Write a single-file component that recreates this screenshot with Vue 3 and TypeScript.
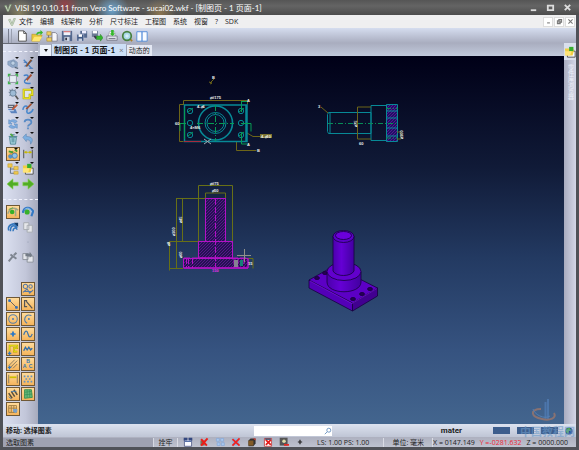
<script setup lang="ts">
import { ref } from 'vue'

interface Tool { id: string; label: string; boxed?: boolean; menu?: boolean }

const menus = ['文件', '编辑', '线架构', '分析', '尺寸标注', '工程图', '系统', '视窗', '?', 'SDK']

const art: Record<string, string> = {
  blank: '',
  page: '<path d="M3 1h6l3 3v9H3z" fill="#fff" stroke="#444"/><path d="M9 1v3h3" fill="none" stroke="#444"/>',
  open: '<path d="M1 5h5l1 1h6l-3 7H1z" fill="#e8c73c" stroke="#b58e18" stroke-width=".6"/><path d="M4 8h9l-3 5H1z" fill="#ffe672"/><path d="M6 5c1-3 3-3 5-3V0l3 3-3 3V4C9 4 8 4 7 6z" fill="#35b82c"/>',
  assembly: '<path d="M1 2h5v4H1zM1 9h6v4H1z" fill="#f0cf62" stroke="#a98a2c" stroke-width=".7"/><path d="M7 3h4l2 2v8H7z" fill="#f6f6fa" stroke="#667" stroke-width=".8"/><path d="M3 6v3" stroke="#667"/>',
  save: '<path d="M1 1h12v12H1z" fill="#54698f"/><path d="M3 1h8v5H3z" fill="#eef2fa"/><path d="M3 2h8" stroke="#c44"/><path d="M4 8h6v5H4z" fill="#cdd5e2"/><path d="M5 9h2v3H5z" fill="#334"/>',
  saveall: '<path d="M5 1h8v8H5z" fill="#54698f"/><path d="M7 1h5v3H7z" fill="#eef"/><path d="M1 5h8v8H1z" fill="#405985" stroke="#dde" stroke-width=".5"/><path d="M3 5h4v3H3z" fill="#fff"/><path d="M3 10h4v3H3z" fill="#c2cbdc"/>',
  export: '<path d="M1 1h7v7H1z" fill="#6b7993"/><path d="M2 1h5v3H2z" fill="#fff"/><path d="M6 7h5V5l3 4-3 4v-2H6z" fill="#33b52d" stroke="#207a20" stroke-width=".5"/><path d="M4 7l2 3" stroke="#334" stroke-width="2"/>',
  print: '<path d="M3 7l1-5h6l1 5z" fill="#fff" stroke="#889" stroke-width=".6"/><path d="M1 7h12v5H1z" fill="#dde1e9" stroke="#667" stroke-width=".8"/><path d="M6 0h3v4h2L7.500 7 4 4h2z" fill="#35b82c"/><path d="M3 10h8" stroke="#667"/>',
  preview: '<path d="M9 9l4 4" stroke="#a87e2a" stroke-width="2"/><circle cx="7" cy="7" r="5" fill="#a9d8e8" stroke="#47803e" stroke-width="2"/><circle cx="7" cy="7" r="2" fill="#d5eff5"/>',
  panes: '<path d="M1 2h12v11H1z" fill="#f9fcff" stroke="#4a86d8"/><path d="M7 2v11" stroke="#4a86d8" stroke-width="1.400"/>',
  view: '<path d="M1 4l7-2 4 3v5l-6 1-5-3z" fill="#93abc9" stroke="#6783a8" stroke-width=".6"/><circle cx="7" cy="6" r="2.500" fill="#bdd0e4" stroke="#6680a0" stroke-width=".7"/><path d="M9 11l4 1" stroke="#567" stroke-width="1.500"/>',
  wand: '<path d="M2 2l9 10M3 10l9-7" stroke="#4d83c0" stroke-width="1.500"/><path d="M5 10l6-8" stroke="#854e2d" stroke-width="2"/><path d="M2 5h4M8 12h5" stroke="#3a70b8"/>',
  fit: '<path d="M3 3h8v8H3z" fill="#e6eef4" stroke="#667" stroke-width=".7"/><path d="M1 1h4L1 5zM13 1H9l4 4zM1 13h4L1 9zM13 13H9l4-4z" fill="#3fb34c"/>',
  pencil: '<path d="M2 3c5-2 7 1 3 4s-2 6 5 5" fill="none" stroke="#4380c8" stroke-width="1.700"/><path d="M5 9l6-7" stroke="#a84f32" stroke-width="2.200"/><path d="M4 11l1-3 1 1z" fill="#ffe5b0"/>',
  gear: '<path d="M2 5h9M6 1v9M3 2l7 7M10 2L3 9" stroke="#64788e" stroke-width="1.200"/><circle cx="7" cy="6" r="3.500" fill="#9ebbd6" stroke="#6b8299"/><path d="M10 9l3 4" stroke="#555" stroke-width="2"/>',
  shape: '<path d="M2 2h10v6H9v4H2z" fill="#dfe3ee" stroke="#aaa300" stroke-width="2.400"/><path d="M2 2h10v6H9v4H2z" fill="none" stroke="#f2eb27" stroke-width="1.200"/>',
  paint: '<path d="M1 2h8v4H1z" fill="#5a6070"/><path d="M1 7h9l2 5H5z" fill="#5b83be"/><path d="M6 8l6-6" stroke="#c25836" stroke-width="2"/><path d="M2 4h5" stroke="#eee"/><path d="M2 9h6" stroke="#dce9f9"/>',
  curve: '<path d="M1 8c1-6 7-6 5 0s5 5 7-1" fill="none" stroke="#4787cc" stroke-width="1.800"/><path d="M5 7l6-6" stroke="#a45131" stroke-width="2"/>',
  refresh: '<path d="M2 7V2l2 1c3-2 6-1 8 1L9 6C7 4 5 4 4 5l2 2zM12 7v5l-2-1c-3 2-6 1-8-1l3-2c2 2 4 2 5 1L8 7z" fill="#7eace0" stroke="#5885b8" stroke-width=".6"/>',
  help: '<path d="M3 5c0-4 8-4 8 0 0 3-4 2-4 5M7 11v2" fill="none" stroke="#578ac5" stroke-width="2"/>',
  trash: '<path d="M3 5h8l-1 8H4z" fill="#a6d5df" stroke="#4a8291"/><path d="M2 4h10M5 2h4M6 6v5M8 6v5" stroke="#40798c"/><path d="M4 1l3 3" stroke="#51a844" stroke-width="2"/>',
  undo: '<path d="M1 5l4-4v3c7 0 9 4 5 9 0-4-1-5-5-5v2z" fill="#7dafe0" stroke="#527dac" stroke-width=".6"/>',
  scene: '<path d="M1 9l5-6 6 3-4 7z" fill="#daa04a"/><circle cx="4" cy="10" r="2.500" fill="#5193c9"/><circle cx="9" cy="9" r="3" fill="#92c4e8" stroke="#487faf"/><path d="M2 4l5 1M9 2l3 2" stroke="#3e9d34" stroke-width="2"/>',
  dimension: '<path d="M2 2v10M12 2v10" stroke="#555" stroke-width="1.200"/><path d="M3 5h8M3 5l2-1v2zM11 5L9 4v2z" fill="#c7b800" stroke="#c7b800"/>',
  tree: '<path d="M4 4v8h5M4 7h5" fill="none" stroke="#567"/><path d="M1 1h5v4H1zM8 4h5v4H8zM8 10h5v3H8z" fill="#f0ca4e" stroke="#bc982d" stroke-width=".6"/>',
  folder: '<path d="M4 6h9v7H4z" fill="#f5f8ff" stroke="#444"/><path d="M1 3h5l1 1h5l-2 7H2z" fill="#f1ce43"/><path d="M6 1h5v5H6z" fill="#35ad30"/><path d="M1 6h8l-2 5H1z" fill="#ffe478"/>',
  left: '<path d="M0 7l7-6v4h6v4H7v4z" fill="#51ad24" stroke="#8ad255" stroke-width=".7"/>',
  right: '<path d="M14 7L7 1v4H1v4h6v4z" fill="#51ad24" stroke="#8ad255" stroke-width=".7"/>',
  snapA: '<path d="M1 9C3 2 9 1 13 5M10 4v8" fill="none" stroke="#9fa88b" stroke-width="1.800"/><circle cx="6" cy="7" r="2.700" fill="#38b029"/><path d="M2 4l5-2" stroke="#5aaa34"/>',
  snapB: '<path d="M1 8C2 1 9 0 13 6l-2 6" fill="none" stroke="#3479c4" stroke-width="2.500"/><circle cx="6" cy="7" r="3" fill="#38b029"/><path d="M3 4c4-3 7-1 8 3" fill="none" stroke="#9bcaf5"/>',
  rings: '<path d="M2 11c-2-7 7-10 10-5M4 12c0-7 4-8 8-4M7 12c0-4 3-5 5-2" fill="none" stroke="#3376bd" stroke-width="1.800"/><path d="M8 2h5v5" fill="#163d6b"/>',
  copy: '<path d="M2 2h6v8H2zM6 5h6v8H6z" fill="#e6e7ea" stroke="#a3a7ad"/>',
  dot: '<circle cx="7" cy="7" r=".6" fill="#8993a8"/>',
  pin: '<path d="M2 12l5-6M4 4l7 5M8 5l3-3" stroke="#7f8691" stroke-width="2.300"/>',
  paste: '<path d="M1 3h6v7H1zM6 6h7v7H6z" fill="#e4e6eb" stroke="#888d96"/><path d="M4 3h5V1l3 4-3 3V6H4z" fill="#747c87"/>',
  filter: '<g fill="none" stroke="#5578a7" stroke-width="1.200"><circle cx="4" cy="4" r="2.500"/><circle cx="10" cy="4" r="2"/><path d="M1 11l5-4 3 5 4-4M3 10h9"/></g>',
  line: '<path d="M3 3l8 8" stroke="#555" stroke-width="1"/><path d="M2 2h2v2H2zM10 10h2v2h-2z" stroke="#3271bd" fill="#3271bd"/>',
  poly: '<path d="M6 3H3v7h3M5 4l7 8" fill="none" stroke="#555" stroke-width="1.400"/>',
  circle: '<circle cx="7" cy="7" r="5" fill="none" stroke="#547da8" stroke-width="1.200"/><path d="M6 6h2v2H6z" fill="#2d71c3"/>',
  arc: '<path d="M11 3C3 0 1 9 6 12" fill="none" stroke="#547da8" stroke-width="1.300"/><path d="M7 6h2v2H7z" fill="#2d71c3"/>',
  plus: '<path d="M7 4v6M4 7h6" stroke="#2675c8" stroke-width="2"/>',
  wave: '<path d="M2 8c2-6 4-5 5-1s3 5 5 0" fill="none" stroke="#3d73a9" stroke-width="1.400"/>',
  profile: '<path d="M3 10V3h9v3H8v4h4" fill="none" stroke="#b8a800" stroke-width="2"/><path d="M3 10V3h9v3H8v4h4" fill="none" stroke="#f3ea1c" stroke-width=".8"/><path d="M3 10v4M1 12h4" stroke="#3978b5" stroke-width="1.500"/>',
  zigzag: '<path d="M2 9l2-4 2 3 2-3 2 3 2-2" fill="none" stroke="#316eaa" stroke-width="1.600"/>',
  hatch: '<path d="M2 9l7-7M4 11l8-8M7 12l5-5" stroke="#7b6f59"/><path d="M3 9v4M1 11h4" stroke="#3378bd" stroke-width="1.400"/>',
  letters: '<text x="5" y="6" font-family="Liberation Sans" font-size="6" font-weight="700" fill="#3474b1">B</text><text x="1" y="12" font-family="Liberation Sans" font-size="6" font-weight="700" fill="#3474b1">A</text><text x="8" y="12" font-family="Liberation Sans" font-size="6" font-weight="700" fill="#3474b1">C</text>',
  width: '<path d="M2 2v10M12 2v10" stroke="#7c735d"/><path d="M3 5h8" stroke="#cdbf00" stroke-width="2"/>',
  mesh: '<path d="M2 3h2v2H2zM6 3h2v2H6zM10 3h2v2h-2zM4 6h2v2H4zM8 6h2v2H8zM2 9h2v2H2zM6 9h2v2H6zM10 9h2v2h-2z" fill="#6594be"/>',
  springs: '<path d="M2 6l4 6M5 4l4 6M8 2l4 6" stroke="#59513e" stroke-width="1.800"/><path d="M2 10l3 3M5 4l6 0" stroke="#4481b7"/>',
  surface: '<path d="M3 2h8l1 9-9 1z" fill="#67b979" stroke="#328d4c"/><path d="M3 5l8-1M3 8l9-1M6 2v9M9 2v9" stroke="#2f8a52" stroke-width=".7"/>',
  table: '<path d="M2 3h9v8H2zM2 6h9M5 3v8M8 3v8" fill="none" stroke="#9c793e"/><path d="M7 7h5v3l-2 2-3-2z" fill="#7ba0c6"/>',
  calendar: '<path d="M2 3h10v10H2z" fill="#f9faff" stroke="#3b4776"/><path d="M1 1h5v4H1zM8 1h5v4H8z" fill="#33477f"/><path d="M2 5h10v2H2z" fill="#5871a8"/>',
  cross: '<path d="M2 5h6v7H2z" fill="#7d6d54"/><path d="M3 3l8 9M12 2L3 12" stroke="#ec1c17" stroke-width="2.800"/>',
  dots: '<path d="M2 2h4v4H2zM8 2h4v4H8zM3 8h4v4H3zM9 8h4v4H9z" fill="#a9c7ed" stroke="#85a7d9"/>',
  crossblue: '<path d="M2 2h9v10H2z" fill="#8eb1dc"/><path d="M2 3l10 9M12 2L2 12" stroke="#ef2321" stroke-width="2.500"/>',
  cube: '<path d="M2 5l3-3h7v7l-3 4H2z" fill="#333"/><path d="M2 5h7v7H2z" fill="#815a26"/><path d="M8 2h4v3z" fill="#e0372d"/>',
  crossbox: '<path d="M2 2h10v11H2z" fill="#fff" stroke="#b22"/><path d="M4 4l7 7M11 4l-7 7" stroke="#e41d1b" stroke-width="2.400"/><path d="M3 3h8" stroke="#394866" stroke-width="2"/>',
  target: '<path d="M1 1h11v11H1z" fill="#555"/><circle cx="7" cy="6" r="2.500" fill="#dedba8"/><path d="M7 11h7" stroke="#e52b24" stroke-width="2.500"/>',
  star: '<path d="M7 4v6M4 7h6" stroke="#222" stroke-width="1.700"/>'
}

const toolbar: Tool[] = [
  { id: 'page', label: '新建' }, { id: 'open', label: '打开' }, { id: 'assembly', label: '装配' },
  { id: 'save', label: '保存' }, { id: 'saveall', label: '全部保存' }, { id: 'export', label: '导出' },
  { id: 'print', label: '打印' }, { id: 'preview', label: '预览' }, { id: 'panes', label: '窗格' }
]

const toTools = (ids: string, on: string[] = [], menu = false): Tool[] =>
  ids.split(' ').map(id => ({ id, label: id, boxed: on.includes(id), menu: menu && id !== 'left' && id !== 'right' }))

const groups: Tool[][] = [
  toTools('view wand fit pencil gear shape paint curve refresh help trash undo scene dimension tree folder left right', ['scene'], true),
  toTools('snapA snapB rings copy blank dot pin paste', ['snapA']),
  toTools('blank filter line poly circle arc plus wave profile zigzag hatch letters width mesh springs surface table')
    .map(t => ({ ...t, boxed: t.id !== 'blank' }))
]

const statusTools = toTools('calendar cross dots crossblue cube crossbox target star')
const holes = [[190, 111], [190, 123], [190, 135], [241, 111], [241, 123], [241, 135]]
const plateHoles = [[317, 278], [325, 273], [370, 289], [362, 294], [353, 299]]
const search = ref('')
const activeTab = ref(0)
</script>

<template>
  <div class="window">
    <header class="titlebar">
      <svg class="logo" viewBox="0 0 14 14"><path d="M1 3l3-1 3 8 3-9h3L8 13H6z" fill="#d5e0cb" stroke="#719069" /></svg>
      <h1>VISI 19.0.10.11 from Vero Software - sucai02.wkf - [制图页 - 1 页面-1]</h1>
      <div class="winbtns">
        <button aria-label="最小化"><svg viewBox="0 0 10 10"><path d="M2 8h6" /></svg></button>
        <button aria-label="最大化"><svg viewBox="0 0 10 10"><path d="M2 3h6v5H2z" /></svg></button>
        <button aria-label="关闭"><svg viewBox="0 0 10 10"><path d="M2 2l6 6M8 2L2 8" /></svg></button>
      </div>
    </header>

    <div class="frame">
      <nav class="menubar">
        <svg class="logo" viewBox="0 0 14 14"><path d="M1 3l3-1 3 8 3-9h3L8 13H6z" fill="#dce5d6" stroke="#829c79" /></svg>
        <button v-for="m in menus" :key="m">{{ m }}</button>
        <div class="docbtns">
          <button aria-label="最小化文档"><svg viewBox="0 0 10 10"><path d="M3 7h4" /></svg></button>
          <button aria-label="还原文档"><svg viewBox="0 0 10 10"><path d="M4 2h4v4H4zM2 4h4v4H2z" /></svg></button>
          <button aria-label="关闭文档"><svg viewBox="0 0 10 10"><path d="M2 2l6 6M8 2L2 8" /></svg></button>
        </div>
      </nav>

      <div class="workspace">
        <div class="toolbar">
          <i class="grip"></i>
          <button v-for="t in toolbar" :key="t.id" :aria-label="t.label">
            <svg viewBox="0 0 14 14" v-html="art[t.id]"></svg>
          </button>
        </div>

        <aside class="sidebar">
          <div v-for="(g, gi) in groups" :key="gi" class="group">
            <button v-for="(t, i) in g" :key="i" class="tool" :class="{ boxed: t.boxed }" :aria-label="t.label">
              <svg viewBox="0 0 14 14" v-html="art[t.id]"></svg>
              <i v-if="t.menu" class="caret"></i>
            </button>
          </div>
        </aside>

        <div class="tabs">
          <button class="pick" aria-label="页面列表"><i></i></button>
          <button class="tab" :class="{ active: activeTab === 0 }" @click="activeTab = 0">制图页 - 1 页面-1<span>×</span></button>
          <button class="tab" :class="{ active: activeTab === 1 }" @click="activeTab = 1">动态的</button>
        </div>

        <main class="canvas">
          <svg viewBox="38 56 526 367" preserveAspectRatio="xMinYMin meet">
            <defs>
              <pattern id="cut" width="3" height="3" patternUnits="userSpaceOnUse">
                <path d="M0 3L3 0" stroke="#7a14b0" stroke-width=".6" />
              </pattern>
              <linearGradient id="shaft"><stop offset="0" stop-color="#4b00ac" /><stop offset=".4" stop-color="#6500d5" /><stop offset="1" stop-color="#4200a0" /></linearGradient>
            </defs>

            <!-- plan view -->
            <g fill="none" stroke="#6d6518">
              <path d="M183.500 105v-4.500h64v4M184 104.500h-4.500v37h4M247 133l6 3.500h7M236.500 142v8.500h20M209 82l3 1-2 1M211 82l3-3" />
            </g>
            <g fill="none" stroke="#078996">
              <path d="M184.500 105h62.500v36.500h-62.500zM246 105v36" stroke-width="1.500" />
              <circle cx="215.500" cy="123" r="17" stroke-width="1.600" />
              <circle cx="215.500" cy="123" r="10.500" /><circle cx="215.500" cy="123" r="8.500" />
              <circle v-for="(h, i) in holes" :key="i" :cx="h[0]" :cy="h[1]" r="2.700" />
            </g>
            <g fill="none" stroke="#079c53">
              <path d="M215.500 105v36M197 123.500h37" stroke-dasharray="6 2 1 2" />
              <path d="M184.500 108v31M241.500 101v11M241.500 132v12M241.500 101.500h6M241.500 144h6M180 123.500h6M180 123v8M241 123.500h10v8M188 112l5-4M239 112l5-4M188 136l5-4M239 136l5-4" />
            </g>
            <path d="M184 141.500h17" stroke="#a62b3e" /><path d="M204 139l7 5M204 144l7-5" stroke="#a3a6ae" />
            <path d="M260 134h12v4h-12z" fill="#7a7330" />
            <g class="dim">
              <text x="210" y="99">⌀#175</text><text x="197" y="108">4-⌀6</text><text x="190" y="129">4×M6</text>
              <text x="261" y="138">4-⌀10</text><text x="257" y="152">B</text><text x="247" y="102">A</text><text x="247" y="146">A</text>
              <text x="175" y="125">60</text><text x="212" y="79">B</text>
            </g>

            <!-- side view -->
            <path d="M386 104.500h11v37.500h-11z" fill="#201263" /><path d="M386 104.500h11v37.500h-11z" fill="url(#cut)" />
            <g fill="none" stroke="#078996">
              <path d="M328.500 112.500H371v21h-42.500l-1-2v-17zM330 113v20M371 105.500h15.500v35H371zM386.500 104.500h11v37h-11zM386 111h11M386 118h11M386 128h11M386 136h11" />
            </g>
            <path d="M328 123.500h70M386 108.500h12M386 138h12" fill="none" stroke="#078d58" stroke-dasharray="5 2 1 2" />
            <path d="M371 107h-13.500v32H371M321 107l7 6M397 132h4v7h-4" fill="none" stroke="#6d6518" />
            <g class="dim"><text x="318" y="108">3</text><text x="359" y="145">60</text><text transform="translate(357 127)rotate(-90)">⌀75</text><text transform="translate(403 139)rotate(-90)">⌀100</text></g>

            <!-- section view -->
            <g fill="none" stroke="#687016">
              <path d="M198.500 241v-55.500h34v56M205.500 198v-5h20v5M205 198.500h-29M176.500 198v70M182.500 198v43M198 241.500h-28.500v29M183 268.500h-14M248 258.500h5v10" />
            </g>
            <g stroke="#b312c5">
              <path d="M205.500 198.500h20v43h-20zM198.500 241.500h34v16.500h-34zM183.500 258.500h64.500v9.500h-64.500z" fill="#241352" />
              <path d="M205.500 198.500h20v43h-20zM198.500 241.500h34v16.500h-34zM183.500 258.500h64.500v9.500h-64.500z" fill="url(#cut)" />
              <path d="M184 258h64M186.500 258v10M188.500 258v10M192.500 258v10M234 258v10M238 258v10M244 258v10M215.500 199v69" fill="none" stroke-dasharray="6 2" />
              <path d="M184 268h64" />
            </g>
            <g class="dim">
              <text x="210" y="185">⌀#75</text><text x="212" y="192">⌀50</text>
              <text transform="translate(182 223)rotate(-90)">⌀45</text><text transform="translate(175 236)rotate(-90)">⌀100</text>
              <text transform="translate(182 258)rotate(-90)">⌀60</text><text transform="translate(170 246)rotate(-90)">⌀8</text>
              <text x="248" y="265">15</text>
            </g>
            <text class="base" x="212" y="272">150</text>
            <path d="M234 260h4v7h-4z" fill="#868393" /><path d="M240 260h3v6h-3z" fill="#168178" />
            <path d="M237 255.500h14M244.500 249v13" stroke="#8e918b" />

            <!-- solid model -->
            <g stroke="#18003f" stroke-width=".8">
              <path d="M309 280v8l43.500 23V303z" fill="#5300b7" /><path d="M352.500 303v8l25-15v-8z" fill="#410090" />
              <path d="M309 280l25-14 43.500 22-25 15z" fill="#5c00c5" />
              <ellipse v-for="(h, i) in plateHoles" :key="i" :cx="h[0]" :cy="h[1]" rx="2.500" ry="1.600" fill="#250053" />
              <path d="M327 272v10c0 13 34 13 34 0v-10z" fill="url(#shaft)" /><ellipse cx="344" cy="271.500" rx="17" ry="9" fill="#6200cd" />
              <path d="M333 236v35c3 6 18 6 21 0v-35z" fill="url(#shaft)" /><ellipse cx="343.500" cy="236.500" rx="10.500" ry="6" fill="#5b00c8" />
              <ellipse cx="343.500" cy="235.500" rx="8" ry="4" fill="#6b00dc" />
            </g>
            <path d="M310 281l42 22.500 25-15" fill="none" stroke="#7b18df" stroke-width=".7" />

            <!-- studio emblem -->
            <g fill="none" opacity=".7">
              <path d="M545.500 402v17M548 399v20" stroke="#527fb9" stroke-width="2" />
              <path d="M541 409c-12 0-10 8 1 10 8 2 15-1 12-6" stroke="#a87967" stroke-width="2" /><path d="M533 409c1 5 11 11 17 7" stroke="#5e8cc3" />
            </g>
          </svg>
        </main>

        <aside class="dock">
          <button aria-label="资源"><svg viewBox="0 0 14 14" v-html="art.folder"></svg></button>
          <span>零件库浏览器</span>
        </aside>
      </div>

      <footer class="status">
        <div class="row first">
          <strong class="prompt">移动: 选择图素</strong>
          <label class="search">
            <input v-model="search" type="text" aria-label="搜索" />
            <svg viewBox="0 0 10 10"><circle cx="6" cy="4" r="2.500" /><path d="M4 6L1 9" /></svg>
          </label>
          <strong class="material">mater</strong>
          <div class="swatches"><i></i><i></i><i></i></div>
          <svg class="globe" viewBox="0 0 10 10"><circle cx="5" cy="5" r="4.500" fill="#1c3f91" /><path d="M2 2l4-1 2 3-3 1-1 4-3-3z" fill="#4eac44" /></svg>
          <span class="mark">中国教程网</span>
        </div>
        <div class="row second">
          <span class="hint">选取图素</span>
          <button class="lock">拴牢</button>
          <div class="snaps">
            <button v-for="t in statusTools" :key="t.id" :aria-label="t.label"><svg viewBox="0 0 14 14" v-html="art[t.id]"></svg></button>
          </div>
          <span class="scale">LS: 1.00 PS: 1.00</span>
          <span class="unit">单位: 毫米</span>
          <span class="coords"><span>X = 0147.149</span><span class="red">Y =-0281.632</span><span>Z = 0000.000</span></span>
        </div>
      </footer>
    </div>
  </div>
</template>

<style>
body { margin: 0; background: #505258; }
</style>

<style scoped>
* { box-sizing: border-box; }
.window { min-height: 100vh; display: flex; flex-direction: column; background: #505258; padding: 0 3px 4px; font: 7px/9px "Open Sans", "Noto Sans CJK SC", sans-serif; color: #222; }
button { padding: 0; border: 0; background: none; font: inherit; color: inherit; display: flex; align-items: center; justify-content: center; }
svg { display: block; }
i { display: block; }
h1 { margin: 0; font: 400 8px/12px Lato, "Noto Sans CJK SC", sans-serif; color: #fff; white-space: nowrap; }
.titlebar { height: 15px; flex: none; display: flex; align-items: center; gap: 3px; margin: 0 -3px; padding: 0 1px 0 4px; background: radial-gradient(circle at 65px 4px, #b52f3a99, transparent 14px), radial-gradient(circle at 112px 10px, #6ba2cb, transparent 17px), radial-gradient(circle at 160px 14px, #b08c5099, transparent 16px), radial-gradient(circle at 20px 13px, #b1a56c88, transparent 15px), linear-gradient(#555, #646464 40%, #4c4c4c); }
.logo { width: 8px; height: 8px; }
.winbtns { margin-left: auto; display: flex; gap: 8px; padding-right: 6px; }
.winbtns svg { width: 9px; height: 9px; fill: none; stroke: #ddd; stroke-width: 2; }
.frame { flex: 1; display: flex; flex-direction: column; }
.menubar { height: 13px; flex: none; display: flex; align-items: center; gap: 7px; padding-left: 5px; background: #efeff0; }
.menubar > .logo { margin-right: -4px; }
.docbtns { margin-left: auto; display: flex; gap: 1px; padding-right: 1px; }
.docbtns button { width: 10px; height: 10px; background: #fff; border: 1px solid #ddd; }
.docbtns svg { width: 7px; height: 7px; fill: none; stroke: #777; stroke-width: 1.5; }
.workspace { flex: 1; display: grid; grid-template: 15px 13px minmax(0, 1fr) / 35px minmax(0, 1fr) 12px; background: linear-gradient(#d5ddef, #a9adbf 15px, #c2cadc 28px); }
.toolbar { grid-column: 1 / -1; display: flex; align-items: center; gap: 3px; padding-left: 5px; }
.toolbar button, .toolbar svg { width: 12px; height: 12px; }
.grip { width: 4px; height: 14px; border-left: 1px solid #777d8e; border-right: 1px solid #999faf; margin-right: 1px; }
.sidebar { grid-row: 2 / 4; grid-column: 1; border-top: 1px solid #666a75; background: linear-gradient(90deg, #dce1f1, #c2c6d9 65%, #a6aabc); padding-top: 7px; }
.group { display: grid; grid-template-columns: 14px 14px; grid-auto-rows: 14px; gap: 1px; border-top: 1px dashed #f2f4ff; padding: 5px 3px 8px; }
.group:nth-child(3) { border-top: 0; padding-top: 10px; }
.tool { position: relative; }
.tool svg { width: 12px; height: 12px; }
.boxed { border: 1px solid #6f5836; background: linear-gradient(#ffdb9b, #f5b45c); }
.caret { position: absolute; top: 0; right: 1px; border: 2px solid transparent; border-top-color: #111; border-bottom: 0; }
.tabs { grid-column: 2; display: flex; align-items: end; padding: 0 2px; }
.pick { width: 11px; height: 11px; background: #edf1fa; }
.pick i { border: 2px solid transparent; border-top: 3px solid #111; border-bottom: 0; }
.tab { height: 11px; padding: 0 2px; background: #e4e8f3; border-left: 1px solid #9ba3b7; }
.tab.active { height: 12px; background: #cddff6; color: #111; font: 700 8px/10px Lato, "Noto Sans CJK SC", sans-serif; }
.tab span { padding-left: 4px; color: #777; font-weight: 400; }
.canvas { grid-column: 2; grid-row: 3; background: linear-gradient(#000017, #101a37 30%, #233a62 55%, #365380 80%, #43658e); }
.canvas > svg { width: 100%; }
.dim { fill: #eef0ed; font: 700 4px "Liberation Sans", sans-serif; }
.base { fill: #e52eee; font: 700 4px "Liberation Sans", sans-serif; }
.dock { grid-column: 3; grid-row: 2 / 4; display: flex; flex-direction: column; align-items: center; gap: 4px; background: linear-gradient(90deg, #a9acbf, #d4d7e7); }
.dock button { width: 12px; height: 17px; background: #d9dfec; }
.dock svg { width: 12px; height: 12px; }
.dock span { writing-mode: vertical-rl; color: #edf0f8; font-size: 6px; }
.row { display: flex; align-items: center; white-space: nowrap; }
.first { position: relative; height: 13px; padding: 0 3px; background: linear-gradient(#dce2ef, #bfc5d5); }
.prompt { width: 248px; flex: 0 1 auto; }
.search { display: flex; align-items: center; width: 78px; height: 10px; background: #fff; }
.search input { flex: 1; min-width: 0; height: 10px; padding: 0; border: 0; background: none; outline: none; font: inherit; }
.search svg { width: 8px; height: 8px; fill: none; stroke: #5584b7; }
.material { margin-left: auto; font: 700 8px/10px Roboto, sans-serif; padding-right: 31px; }
.swatches { display: flex; gap: 7px; }
.swatches i { width: 17px; height: 7px; background: #3c5d8c; }
.globe { width: 8px; height: 8px; margin-left: 7px; }
.mark { position: absolute; right: 1px; top: 2px; color: #6d9ac8; font-size: 11px; font-weight: 700; line-height: 11px; opacity: .6; }
.second { height: 10px; background: linear-gradient(#adb0bf, #bec2cf); }
.hint { width: 151px; padding-left: 3px; border-right: 1px solid #d6d9e3; background: #9fa2b2; }
.lock { width: 24px; border-right: 1px solid #dadce5; }
.snaps { display: flex; gap: 6px; padding-left: 5px; }
.snaps button { width: 10px; height: 10px; }
.snaps svg { width: 10px; height: 10px; }
.scale { padding-left: 12px; }
.unit { margin-left: auto; padding: 0 8px; border-left: 1px solid #dadce5; border-right: 1px solid #dadce5; }
.coords { display: flex; gap: 5px; padding-right: 8px; }
.red { color: #ee2636; }
</style>
